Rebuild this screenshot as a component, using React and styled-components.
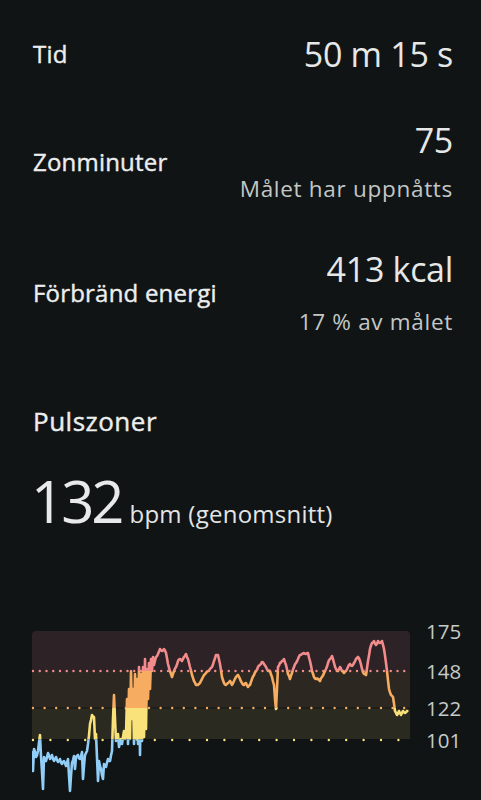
import styled, { createGlobalStyle } from 'styled-components';

const GlobalStyle = createGlobalStyle`
  html, body {
    margin: 0;
    padding: 0;
    background: #111414;
  }
  body {
    font-family: "Open Sans", "Noto Sans", sans-serif;
    color: #e6e8e8;
  }
`;

const stats = [
  { label: 'Tid', value: '50 m 15 s' },
  { label: 'Zonminuter', value: '75', note: 'Målet har uppnåtts', gap: 15 },
  { label: 'Förbränd energi', value: '413 kcal', note: '17 % av målet', gap: 19 },
];

// heart rate trace, page pixel coords (x, y)
const trace = [
  [32,752],[33,772],[34,750],[36,758],[38,752],[40,736],[41,757],[43,790],[44,758],[46,762],[48,754],[50,760],
  [52,756],[54,762],[56,758],[58,763],[60,760],[62,765],[64,762],[66,767],[68,760],[70,792],[72,764],[74,757],
  [75,770],[76,758],[78,756],[80,760],[82,753],[83,780],[85,756],[87,752],[88,745],[90,725],[92,716],[94,718],
  [95,740],[96,735],[98,782],[99,762],[101,770],[103,780],[104,765],[106,768],[108,760],[110,762],[112,752],
  [113,720],[114,696],[115,720],[116,742],[118,735],[119,748],[121,740],[122,745],[124,732],[125,740],
  [126,735],[127,700],[128,745],[129,690],[130,740],[131,672],[132,720],[133,690],[134,745],[135,675],[136,740],
  [137,680],[138,745],[139,668],[140,756],[141,675],[142,742],[143,668],[144,738],[145,660],[146,730],[147,670],
  [148,700],[149,664],[150,690],[151,660],[152,672],[153,658],[154,666],[156,658],[158,655],[160,650],[162,652],
  [164,650],[166,654],[168,665],
  [170,672],[172,678],[174,672],[176,668],[178,662],[180,660],[182,662],[184,658],[186,655],[188,660],[190,668],
  [192,676],[194,682],[196,686],[198,686],[200,684],[202,680],[204,676],[206,674],[208,672],[210,670],[212,668],
  [214,662],[216,656],[218,656],[220,665],[222,678],[224,684],[226,686],[228,684],[230,682],[232,686],[234,682],
  [236,678],[238,676],[240,680],[242,684],[244,686],[246,684],[248,688],[250,686],[252,680],[254,676],[256,672],
  [258,668],[260,666],[262,663],[264,665],[266,668],[268,672],[270,672],[272,678],[274,686],[275,700],[276,710],
  [277,690],[278,668],[280,664],[282,662],[284,660],[286,666],[288,675],[290,680],[292,674],[294,668],[296,664],
  [298,660],[300,656],[302,655],[304,654],[306,655],[308,654],[310,662],[312,672],[314,678],[316,680],[318,680],
  [320,682],[322,678],[324,674],[326,670],[328,664],[330,660],[332,657],[334,664],[336,670],[338,672],[340,668],
  [342,672],[344,674],[346,672],[348,668],[350,665],[352,667],[354,664],[356,660],[358,658],[360,662],[362,670],
  [364,675],[366,676],[368,662],[370,650],[372,644],[374,642],[376,646],[378,642],[380,644],[382,642],[384,650],
  [386,664],[387,672],[389,690],[391,696],[393,698],[395,712],[397,716],[399,712],[401,716],[403,712],[405,714],
  [407,712],[408,713],
];

function buildPoints() {
  let seed = 7;
  const rand = () => {
    seed = (seed * 16807) % 2147483647;
    return seed / 2147483647 - 0.5;
  };
  const out = [];
  for (let i = 0; i < trace.length - 1; i++) {
    const [x0, y0] = trace[i];
    const [x1, y1] = trace[i + 1];
    const steps = Math.max(1, Math.round(x1 - x0));
    for (let s = 0; s < steps; s++) {
      const t = s / steps;
      const amp = x0 < 126 ? 3 : 1.4;
      const y = y0 + (y1 - y0) * t + (s === 0 ? 0 : rand() * amp);
      out.push(`${(x0 + (x1 - x0) * t - 32).toFixed(1)},${(y - 620).toFixed(1)}`);
    }
  }
  const [lx, ly] = trace[trace.length - 1];
  out.push(`${lx - 32},${ly - 620}`);
  return out.join(' ');
}

const zones = [
  { id: 'zr', top: 0, bottom: 52, color: '#f28b8b' },
  { id: 'zo', top: 52, bottom: 89, color: '#f6ad62' },
  { id: 'zy', top: 89, bottom: 120.5, color: '#fae27b' },
  { id: 'zb', top: 120.5, bottom: 180, color: '#90cdf7' },
];

const axis = [
  { label: '175', y: 19.5 },
  { label: '148', y: 59.5 },
  { label: '122', y: 96.5 },
  { label: '101', y: 128.5 },
];

function PulseChart() {
  const points = buildPoints();
  return (
    <ChartSvg width="428" height="180" viewBox="0 0 428 180">
      <defs>
        {zones.map((z) => (
          <clipPath id={z.id} key={z.id}>
            <rect x="0" y={z.top} width="400" height={z.bottom - z.top} />
          </clipPath>
        ))}
      </defs>
      <path d="M0 16 Q0 12 4 12 H374 Q378 12 378 16 V52 H0 Z" fill="#2d2225" />
      <rect x="0" y="52" width="378" height="37" fill="#2c2720" />
      <rect x="0" y="89" width="378" height="31" fill="#2a2a20" />
      <line x1="0" y1="89" x2="378" y2="89" stroke="#151515" strokeWidth="1" />
      <line x1="1" y1="52" x2="378" y2="52" stroke="#f28b8b" strokeWidth="2.4" strokeLinecap="round" strokeDasharray="0 6.75" />
      <line x1="1" y1="89" x2="378" y2="89" stroke="#f6ad62" strokeWidth="2.4" strokeLinecap="round" strokeDasharray="0 11.6" />
      <line x1="1" y1="121" x2="378" y2="121" stroke="#fae27b" strokeWidth="2.4" strokeLinecap="round" strokeDasharray="0 17.4" />
      {zones.map((z) => (
        <polyline
          key={z.id}
          points={points}
          clipPath={`url(#${z.id})`}
          fill="none"
          stroke={z.color}
          strokeWidth="2.6"
          strokeLinejoin="round"
        />
      ))}
      {axis.map((a) => (
        <AxisText key={a.label} x="394" y={a.y}>
          {a.label}
        </AxisText>
      ))}
    </ChartSvg>
  );
}

function App() {
  return (
    <>
      <GlobalStyle />
      <Page>
        {stats.map((s) => (
          <StatRow key={s.label}>
            <StatLabel>{s.label}</StatLabel>
            <StatValues $gap={s.gap}>
              <StatValue>{s.value}</StatValue>
              {s.note && <StatNote>{s.note}</StatNote>}
            </StatValues>
          </StatRow>
        ))}
        <SectionTitle>Pulszoner</SectionTitle>
        <Average>
          <AvgNumber>132</AvgNumber>
          <AvgUnit>bpm (genomsnitt)</AvgUnit>
        </Average>
        <ChartWrap>
          <PulseChart />
        </ChartWrap>
      </Page>
    </>
  );
}

const Page = styled.div`
  width: 481px;
  height: 800px;
  overflow: hidden;
  box-sizing: border-box;
  padding: 34px 28px 0 33px;
  display: flex;
  flex-direction: column;
`;

const StatRow = styled.div`
  display: flex;
  justify-content: space-between;
  align-items: center;
  & + & {
    margin-top: 46px;
  }
`;

const StatLabel = styled.div`
  font-size: 24px;
  line-height: 30px;
  letter-spacing: 0.2px;
  -webkit-text-stroke: 0.4px currentColor;
  color: #eceeee;
`;

const StatValues = styled.div`
  display: flex;
  flex-direction: column;
  align-items: flex-end;
  gap: ${(p) => p.$gap || 0}px;
`;

const StatValue = styled.div`
  font-size: 34px;
  line-height: 40px;
  letter-spacing: -0.3px;
  color: #e6e8e8;
`;

const StatNote = styled.div`
  font-size: 22.5px;
  line-height: 28px;
  letter-spacing: 0.7px;
  color: #c3c8c6;
`;

const SectionTitle = styled.div`
  margin-top: 69px;
  font-size: 26px;
  line-height: 32px;
  letter-spacing: 0.5px;
  -webkit-text-stroke: 0.4px currentColor;
  color: #eceeee;
`;

const Average = styled.div`
  margin-top: 32px;
  height: 64px;
  display: flex;
  align-items: baseline;
  gap: 8px;
  line-height: 64px;
`;

const AvgNumber = styled.span`
  margin-left: -2px;
  font-size: 58px;
  letter-spacing: -3px;
  color: #e8eaea;
`;

const AvgUnit = styled.span`
  font-size: 24px;
  line-height: 1;
  letter-spacing: 0.25px;
  color: #e3e5e5;
`;

const ChartWrap = styled.div`
  margin-top: 86px;
  margin-left: -1px;
  margin-right: -28px;
  display: flex;
`;

const ChartSvg = styled.svg`
  flex-shrink: 0;
  display: block;
  overflow: visible;
`;

const AxisText = styled.text`
  font-family: "Open Sans", "Noto Sans", sans-serif;
  font-size: 20.5px;
  fill: #c6cac9;
`;

export default App;
